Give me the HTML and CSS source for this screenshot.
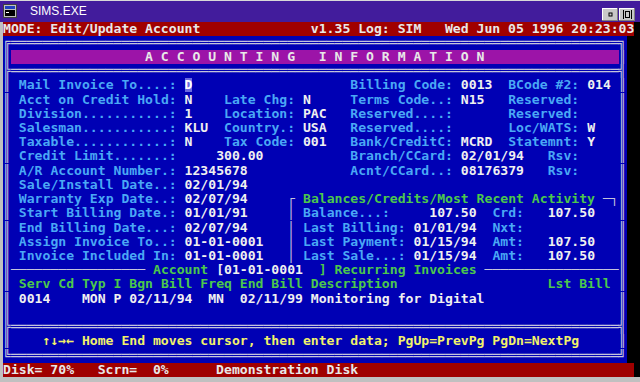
FILE: index.html
```html
<!DOCTYPE html>
<html>
<head>
    <title>SIMS.EXE</title>
    <meta name="viewport" content="width=device-width, initial-scale=1">
    <link rel="stylesheet" href="styles.css">
</head>
<body>
    <div class="window">
        <div class="titlebar">
            <svg class="app-icon" width="14" height="14" viewBox="0 0 14 14">
                <rect x="0.5" y="0.5" width="13" height="13" fill="#c0c0c0" stroke="#404040"/>
                <rect x="2" y="2" width="10" height="3" fill="#2040c0"/>
                <rect x="2" y="6" width="10" height="6" fill="#000"/>
                <rect x="3" y="8" width="3" height="1" fill="#fff"/>
            </svg>
            <span class="title">SIMS.EXE</span>
            <div class="buttons">
                <span class="btn">
                    <svg width="11" height="9" viewBox="0 0 11 9"><rect x="4" y="3" width="3" height="3" fill="none" stroke="#000"/></svg>
                </span>
                <span class="btn">
                    <svg width="11" height="9" viewBox="0 0 11 9"><rect x="1" y="0" width="1" height="9" fill="#000"/><rect x="9" y="0" width="1" height="9" fill="#000"/><rect x="3.5" y="1.5" width="4" height="6" fill="none" stroke="#000"/></svg>
                </span>
            </div>
        </div>
        <div class="screen">
            <div class="row status">MODE: Edit/Update Account              v1.35 Log: SIM   Wed Jun 05 1996 20:23:03</div>
            <div class="panel">
                <div class="row"><span class="ln">╔═════════════════════════════════════════════════════════════════════════════╗</span></div>
                <div class="row"><span class="ln">║</span><span class="band">                 A C C O U N T I N G   I N F O R M A T I O N                 </span><span class="ln">║</span></div>
                <div class="row"><span class="ln">╠═════════════════════════════════════════════════════════════════════════════╣</span></div>
                <div class="row"><span class="ln">║</span> <span class="lb">Mail Invoice To....:</span> <span class="cur">D</span>                    <span class="lb">Billing Code:</span> 0013  <span class="lb">BCode #2:</span> 014 <span class="ln">║</span></div>
                <div class="row"><span class="ln">║</span> <span class="lb">Acct on Credit Hold:</span> N    <span class="lb">Late Chg:</span> N     <span class="lb">Terms Code..:</span> N15   <span class="lb">Reserved:</span>     <span class="ln">║</span></div>
                <div class="row"><span class="ln">║</span> <span class="lb">Division...........:</span> 1    <span class="lb">Location:</span> PAC   <span class="lb">Reserved....:</span>       <span class="lb">Reserved:</span>     <span class="ln">║</span></div>
                <div class="row"><span class="ln">║</span> <span class="lb">Salesman...........:</span> KLU  <span class="lb">Country.:</span> USA   <span class="lb">Reserved....:</span>       <span class="lb">Loc/WATS:</span> W   <span class="ln">║</span></div>
                <div class="row"><span class="ln">║</span> <span class="lb">Taxable............:</span> N    <span class="lb">Tax Code:</span> 001   <span class="lb">Bank/CreditC:</span> MCRD  <span class="lb">Statemnt:</span> Y   <span class="ln">║</span></div>
                <div class="row"><span class="ln">║</span> <span class="lb">Credit Limit.......:</span>     300.00           <span class="lb">Branch/CCard:</span> 02/01/94   <span class="lb">Rsv:</span>     <span class="ln">║</span></div>
                <div class="row"><span class="ln">║</span> <span class="lb">A/R Account Number.:</span> 12345678             <span class="lb">Acnt/CCard..:</span> 08176379   <span class="lb">Rsv:</span>     <span class="ln">║</span></div>
                <div class="row"><span class="ln">║</span> <span class="lb">Sale/Install Date..:</span> 02/01/94                                               <span class="ln">║</span></div>
                <div class="row"><span class="ln">║</span> <span class="lb">Warranty Exp Date..:</span> 02/07/94     <span class="ln">┌</span> <span class="grn">Balances/Credits/Most Recent Activity</span> <span class="ln">─┐║</span></div>
                <div class="row"><span class="ln">║</span> <span class="lb">Start Billing Date.:</span> 01/01/91     <span class="ln">│</span> <span class="lb">Balance...:</span>     107.50  <span class="lb">Crd:</span>   107.50   <span class="ln">║</span></div>
                <div class="row"><span class="ln">║</span> <span class="lb">End Billing Date...:</span> 02/07/94     <span class="ln">│</span> <span class="lb">Last Billing:</span> 01/01/94  <span class="lb">Nxt:</span>            <span class="ln">║</span></div>
                <div class="row"><span class="ln">║</span> <span class="lb">Assign Invoice To..:</span> 01-01-0001   <span class="ln">│</span> <span class="lb">Last Payment:</span> 01/15/94  <span class="lb">Amt:</span>   107.50   <span class="ln">║</span></div>
                <div class="row"><span class="ln">║</span> <span class="lb">Invoice Included In:</span> 01-01-0001   <span class="ln">│</span> <span class="lb">Last Sale...:</span> 01/15/94  <span class="lb">Amt:</span>   107.50   <span class="ln">║</span></div>
                <div class="row"><span class="ln">║─────────────────</span> <span class="grn">Account</span> [01-01-0001  <span class="grn">] Recurring Invoices</span> <span class="ln">─────────────────║</span></div>
                <div class="row"><span class="ln">║</span> <span class="grn">Serv Cd Typ I Bgn Bill Freq End Bill Description                   Lst Bill</span> <span class="ln">║</span></div>
                <div class="row"><span class="ln">║</span> 0014    MON P 02/11/94  MN  02/11/99 Monitoring for Digital                 <span class="ln">║</span></div>
                <div class="row"><span class="ln">║</span>                                                                             <span class="ln">║</span></div>
                <div class="row"><span class="ln">╠═════════════════════════════════════════════════════════════════════════════╣</span></div>
                <div class="row"><span class="ln">║</span>    <span class="yel">↑↓→← Home End moves cursor, then enter data; PgUp=PrevPg PgDn=NextPg</span>     <span class="ln">║</span></div>
                <div class="row"><span class="ln">╚═════════════════════════════════════════════════════════════════════════════╝</span></div>
            </div>
            <div class="row status">Disk= 70%   Scrn=  0%      Demonstration Disk</div>
        </div>
    </div>
</body>
</html>
```

FILE: styles.css
```css
body {
    margin: 0;
    background-color: #c0c0c0;
}
.window {
    width: 640px;
    height: 382px;
    overflow: hidden;
    background-color: #c0c0c0;
}
.titlebar {
    height: 21.5px;
    box-sizing: border-box;
    padding-left: 3px;
    border-top: 1px solid #d8d8d8;
    display: flex;
    align-items: center;
    background-color: #421c9c;
}
.app-icon {
    flex: none;
}
.title {
    margin-left: 13px;
    font-family: "Liberation Sans", Arial, sans-serif;
    font-size: 12px;
    color: #fff;
}
.buttons {
    margin-left: auto;
    margin-right: 5px;
    display: flex;
    gap: 1px;
    align-self: flex-end;
    margin-bottom: 1px;
}
.btn {
    width: 16px;
    height: 13px;
    display: flex;
    align-items: center;
    justify-content: center;
    background-color: #c8c8c8;
    box-shadow: inset -1px -1px #808080, inset 1px 1px #fff;
}
.screen {
    margin-left: 3px;
    width: 637px;
    background-color: #000;
    font-family: "DejaVu Sans Mono", monospace;
    font-size: 13.12px;
    font-weight: bold;
    color: #f0f0f0;
}
.row {
    height: 14.22px;
    line-height: 14.22px;
    white-space: pre;
    overflow: hidden;
}
.status {
    width: 80ch;
    background-color: #a00000;
    color: #e8e8e8;
}
.panel {
    width: 79ch;
    background-color: #0000b4;
}
.ln {
    font-weight: normal;
    color: #c4c4dc;
}
.band {
    background-color: #9c14a8;
    color: #e8e8e8;
}
.lb {
    color: #4aa8f5;
}
.grn {
    color: #4cc84c;
}
.yel {
    color: #f2f26a;
}
.cur {
    background-color: #6a6ae0;
    color: #fff;
}
```
